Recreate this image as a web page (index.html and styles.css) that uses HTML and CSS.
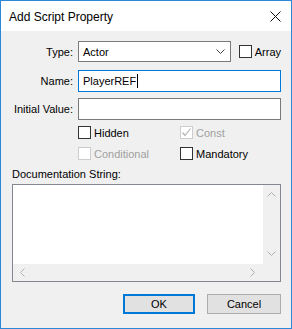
FILE: index.html
```html
<!DOCTYPE html>
<html lang="en">
<head>
  <meta charset="UTF-8">
  <title>Add Script Property</title>
  <link rel="stylesheet" href="styles.css">
</head>
<body>
  <div class="window">
    <div class="titlebar">
      <span class="title">Add Script Property</span>
      <svg class="close" width="11" height="11" viewBox="0 0 11 11">
        <path d="M0.5 0.5 L10.5 10.5 M10.5 0.5 L0.5 10.5" stroke="#111" stroke-width="1" fill="none"/>
      </svg>
    </div>

    <div class="client">
      <div class="row row-type">
        <span class="label">Type:</span>
        <div class="select">
          <span>Actor</span>
          <svg class="chevron" width="9" height="5" viewBox="0 0 9 5">
            <polyline points="0.5,0.5 4.5,4.5 8.5,0.5" stroke="#444" stroke-width="1" fill="none"/>
          </svg>
        </div>
        <span class="check"><span class="box"></span>Array</span>
      </div>

      <div class="row row-name">
        <span class="label">Name:</span>
        <div class="input focused">PlayerREF<span class="caret"></span></div>
      </div>

      <div class="row row-init">
        <span class="label">Initial Value:</span>
        <div class="input"></div>
      </div>

      <div class="checks">
        <span class="check"><span class="box"></span>Hidden</span>
        <span class="check disabled">
          <span class="box">
            <svg width="11" height="11" viewBox="0 0 11 11">
              <polyline points="1.5,5.5 4,8.5 9.5,1.5" stroke="#b5b5b5" stroke-width="1.2" fill="none"/>
            </svg>
          </span>Const
        </span>
        <span class="check disabled"><span class="box"></span>Conditional</span>
        <span class="check"><span class="box"></span>Mandatory</span>
      </div>

      <div class="doc-label">Documentation String:</div>

      <div class="textarea">
        <div class="text-body"></div>
        <div class="vscroll">
          <svg width="9" height="5" viewBox="0 0 9 5"><polyline points="0.5,4.5 4.5,0.5 8.5,4.5" stroke="#b0b0b0" fill="none"/></svg>
          <svg width="9" height="5" viewBox="0 0 9 5"><polyline points="0.5,0.5 4.5,4.5 8.5,0.5" stroke="#b0b0b0" fill="none"/></svg>
        </div>
        <div class="hscroll">
          <svg width="5" height="9" viewBox="0 0 5 9"><polyline points="4.5,0.5 0.5,4.5 4.5,8.5" stroke="#b0b0b0" fill="none"/></svg>
          <svg width="5" height="9" viewBox="0 0 5 9"><polyline points="0.5,0.5 4.5,4.5 0.5,8.5" stroke="#b0b0b0" fill="none"/></svg>
        </div>
        <div class="corner"></div>
      </div>

      <div class="buttons">
        <button class="btn default">OK</button>
        <button class="btn">Cancel</button>
      </div>
    </div>
  </div>
</body>
</html>
```

FILE: styles.css
```css
body {
  margin: 0;
  padding: 0;
  font-family: 'Liberation Sans', Arial, sans-serif;
  font-size: 11px;
  color: #000;
  background-color: #ffffff;
}

.window {
  width: 290px;
  height: 327px;
  border: 1px solid #2b88d8;
  background-color: #f0f0f0;
  display: flex;
  flex-direction: column;
}

.titlebar {
  height: 30px;
  background-color: #ffffff;
  display: flex;
  align-items: center;
  justify-content: space-between;
  padding: 0 10px 0 8px;
  flex-shrink: 0;
}

.title {
  font-size: 12px;
  margin-top: 1px;
}

.close {
  display: block;
  margin-top: 1px;
}

.client {
  flex: 1;
  padding: 10px 10px 0 11px;
  display: flex;
  flex-direction: column;
}

.row {
  display: flex;
  align-items: center;
}

.label {
  width: 61px;
  text-align: right;
  margin-right: 5px;
  flex-shrink: 0;
}

.row-name {
  margin-top: 8px;
}

.row-init {
  margin-top: 6px;
}

.select {
  width: 147px;
  height: 19px;
  border: 1px solid #7a7a7a;
  background-color: #ffffff;
  display: flex;
  align-items: center;
  justify-content: space-between;
  padding: 0 5px 0 4px;
  margin-right: 8px;
}

.select .chevron {
  display: block;
}

.input {
  flex: 1;
  height: 20px;
  border: 1px solid #7a7a7a;
  background-color: #ffffff;
  display: flex;
  align-items: center;
  padding: 0 4px;
}

.input.focused {
  border-color: #0078d7;
}

.caret {
  display: inline-block;
  width: 1px;
  height: 14px;
  background-color: #000;
  margin-left: 1px;
}

.check {
  display: flex;
  align-items: center;
}

.check .box {
  width: 11px;
  height: 11px;
  border: 1px solid #333333;
  background-color: #ffffff;
  margin-right: 3px;
  flex-shrink: 0;
  display: flex;
  align-items: center;
  justify-content: center;
}

.check .box svg {
  display: block;
}

.check.disabled {
  color: #a0a0a0;
}

.check.disabled .box {
  border-color: #cccccc;
}

.checks {
  display: grid;
  grid-template-columns: 102px 1fr;
  row-gap: 8px;
  margin-top: 6px;
  padding-left: 66px;
}

.doc-label {
  margin-top: 7px;
  line-height: 14px;
}

.textarea {
  margin-top: 3px;
  height: 96px;
  border: 1px solid #828790;
  background-color: #ffffff;
  display: grid;
  grid-template-columns: 1fr 17px;
  grid-template-rows: 1fr 17px;
}

.vscroll {
  background-color: #f0f0f0;
  display: flex;
  flex-direction: column;
  justify-content: space-between;
  align-items: center;
  padding: 7px 0 8px;
}

.hscroll {
  background-color: #f0f0f0;
  display: flex;
  justify-content: space-between;
  align-items: center;
  padding: 0 8px 0 7px;
}

.vscroll svg,
.hscroll svg {
  display: block;
}

.corner {
  background-color: #f0f0f0;
}

.buttons {
  display: flex;
  justify-content: flex-end;
  gap: 12px;
  margin-top: 12px;
}

.btn {
  height: 20px;
  width: 74px;
  font-family: 'Liberation Sans', Arial, sans-serif;
  font-size: 11px;
  color: #000;
  background-color: #e1e1e1;
  border: 1px solid #adadad;
  padding: 0;
}

.btn.default {
  width: 72px;
  border: 2px solid #0078d7;
}
```
